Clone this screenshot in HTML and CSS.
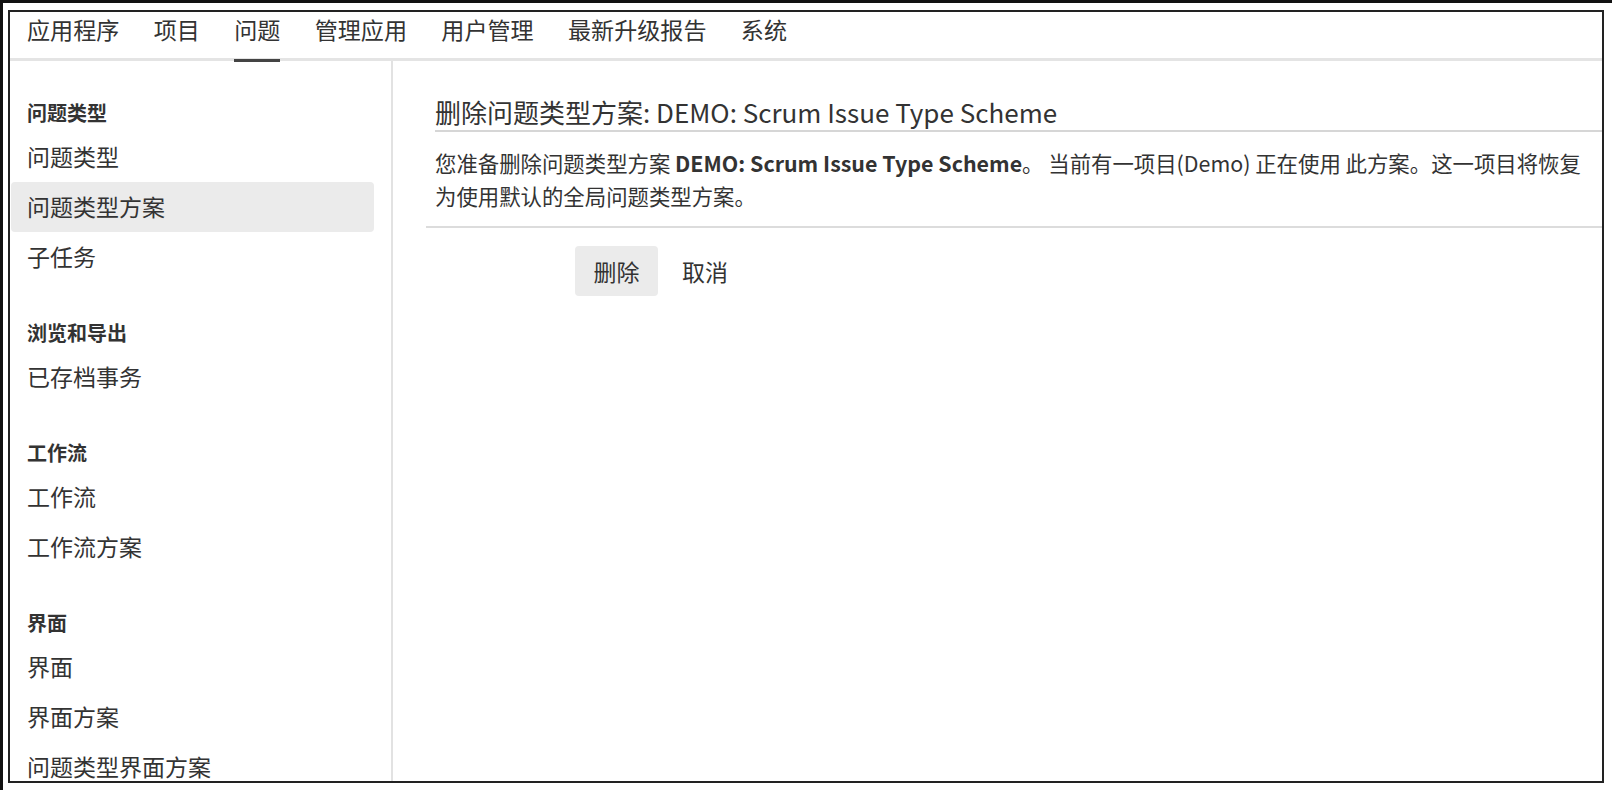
FILE: index.html
```html
<!DOCTYPE html>
<html lang="zh-CN">
<head>
<meta charset="utf-8">
<title>删除问题类型方案</title>
<link rel="stylesheet" href="styles.css">
</head>
<body>
<div class="screen">
  <div class="frame">
    <nav class="topnav">
      <a class="nav-item">应用程序</a>
      <a class="nav-item">项目</a>
      <a class="nav-item active">问题</a>
      <a class="nav-item">管理应用</a>
      <a class="nav-item">用户管理</a>
      <a class="nav-item">最新升级报告</a>
      <a class="nav-item">系统</a>
    </nav>
    <div class="layout">
      <aside class="sidebar">
        <div class="group">
          <div class="group-title">问题类型</div>
          <a class="side-item">问题类型</a>
          <a class="side-item selected">问题类型方案</a>
          <a class="side-item">子任务</a>
        </div>
        <div class="group">
          <div class="group-title">浏览和导出</div>
          <a class="side-item">已存档事务</a>
        </div>
        <div class="group">
          <div class="group-title">工作流</div>
          <a class="side-item">工作流</a>
          <a class="side-item">工作流方案</a>
        </div>
        <div class="group">
          <div class="group-title">界面</div>
          <a class="side-item">界面</a>
          <a class="side-item">界面方案</a>
          <a class="side-item">问题类型界面方案</a>
        </div>
      </aside>
      <main class="content">
        <section class="form">
          <h2 class="form-title">删除问题类型方案: DEMO: Scrum Issue Type Scheme</h2>
          <p class="form-desc">您准备删除问题类型方案 <strong>DEMO: Scrum Issue Type Scheme</strong>。 当前有一项目(Demo) 正在使用 此方案。这一项目将恢复<br>为使用默认的全局问题类型方案。</p>
        </section>
        <div class="actions">
          <button class="btn">删除</button>
          <a class="cancel">取消</a>
        </div>
      </main>
    </div>
  </div>
</div>
</body>
</html>
```
FILE: styles.css
```css
html, body {
  margin: 0;
  padding: 0;
  background: #ffffff;
}
body {
  font-family: "Noto Sans CJK SC", "Noto Sans", sans-serif;
  color: #333333;
}
.screen {
  width: 1612px;
  height: 790px;
  box-sizing: border-box;
  border-top: 3px solid #111111;
  border-left: 3px solid #111111;
  padding: 7px 0 0 5px;
  overflow: hidden;
}
.frame {
  width: 1596px;
  height: 773px;
  box-sizing: border-box;
  border: 2px solid #222222;
  overflow: hidden;
  display: flex;
  flex-direction: column;
}
.topnav {
  display: flex;
  align-items: flex-start;
  gap: 34.3px;
  height: 46px;
  padding-left: 17px;
  border-bottom: 3px solid #e4e4e4;
  flex: none;
}
.nav-item {
  position: relative;
  font-size: 23.1px;
  line-height: 34px;
  color: #333333;
  white-space: nowrap;
}
.nav-item.active::after {
  content: "";
  position: absolute;
  left: 0;
  right: 0;
  top: 47px;
  height: 3px;
  background: #444444;
}
.layout {
  display: flex;
  flex: 1;
  min-height: 0;
}
.sidebar {
  width: 383px;
  flex: none;
  box-sizing: border-box;
  padding: 1px 17px 0 1px;
  border-right: 2px solid #e2e2e2;
}
.group {
  padding-top: 36px;
}
.group-title {
  font-size: 20px;
  font-weight: 700;
  line-height: 30px;
  padding-left: 16px;
  margin-bottom: 4px;
  color: #333333;
}
.side-item {
  display: block;
  height: 50px;
  line-height: 48px;
  font-size: 23px;
  padding-left: 16px;
  border-radius: 4px;
  color: #333333;
  white-space: nowrap;
}
.side-item.selected {
  background: #ebebeb;
}
.content {
  flex: 1;
  padding: 33px 0 0 33px;
  min-width: 0;
}
.form {
  border-bottom: 2px solid #dcdcdc;
  padding-bottom: 14px;
}
.form-title {
  margin: 0 0 0 9px;
  font-size: 26px;
  font-weight: 400;
  line-height: 36px;
  color: #333333;
  border-bottom: 2px solid #d6d6d6;
  white-space: nowrap;
}
.form-desc {
  margin: 14px 0 0 9px;
  font-size: 21.4px;
  line-height: 33px;
  color: #333333;
  white-space: nowrap;
}
.form-desc strong {
  font-weight: 700;
}
.actions {
  display: flex;
  align-items: center;
  gap: 24px;
  padding: 18px 0 0 149px;
}
.btn {
  height: 50px;
  padding: 0 18.5px;
  border: none;
  border-radius: 4px;
  background: #ebebeb;
  font-family: inherit;
  font-size: 23px;
  color: #333333;
}
.cancel {
  font-size: 23px;
  color: #333333;
}
```
